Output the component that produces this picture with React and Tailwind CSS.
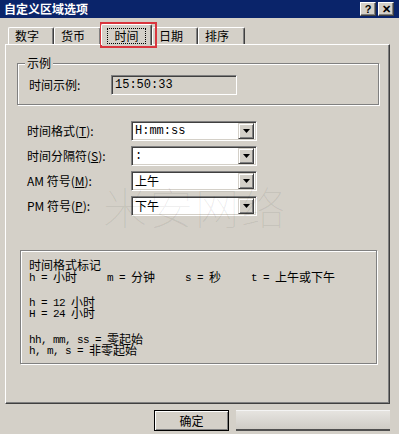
const FONT = "font-['Noto_Sans_CJK_SC','Noto_Sans',sans-serif]";

const Tab = ({ label, selected, w }) =>
  selected ? (
    <div
      className={`relative z-10 h-[21px] ${w} bg-[#d4d0c8] border-t border-l border-white border-r border-r-[#404040] rounded-t-[2px] shadow-[inset_-1px_0_0_#808080] flex items-start justify-center pt-[3px]`}
    >
      <span className="border border-dotted border-black px-[6px] h-[16px] leading-[14px] text-[12px]">{label}</span>
    </div>
  ) : (
    <div
      className={`mt-[3px] h-[17px] ${w} border-t border-l border-white border-r border-r-[#404040] rounded-t-[2px] shadow-[inset_-1px_0_0_#808080] pl-[6px] leading-[16px] text-[12px]`}
    >
      {label}
    </div>
  );

// latin text in the narrow mono face the dialog uses
const M = ({ children }) => (
  <span className="font-['Liberation_Mono',monospace] text-[11px] tracking-[-0.6px] align-[1px] whitespace-pre">{children}</span>
);

const Combo = ({ value, mono }) => (
  <div className="w-[126px] h-[20px] bg-white border border-[#808080] border-b-white border-r-white shadow-[inset_1px_1px_0_#404040,inset_-1px_-1px_0_#d4d0c8] flex items-center p-[2px]">
    <span className={`flex-1 pl-[1px] text-[12px] leading-[14px] ${mono ? "font-['Liberation_Mono',monospace] text-[11px]" : ""}`}>{value}</span>
    <div className="w-[16px] h-[16px] bg-[#d4d0c8] border border-[#d4d0c8] border-b-[#404040] border-r-[#404040] shadow-[inset_1px_1px_0_#fff,inset_-1px_-1px_0_#808080] flex items-center justify-center">
      <svg width="7" height="4" viewBox="0 0 7 4">
        <path d="M0 0h7L3.5 4z" fill="#000" />
      </svg>
    </div>
  </div>
);

const Row = ({ label, hot, value, mono }) => (
  <div className="flex items-center h-[20px]">
    <span className="w-[104px] text-[12px] leading-[14px]">
      {label}(<span className="underline">{hot}</span>):
    </span>
    <Combo value={value} mono={mono} />
  </div>
);

const Line = ({ children }) => <div className="h-[11.5px] leading-[11.5px] whitespace-nowrap">{children}</div>;

export default function App() {
  return (
    <div className={`relative w-[399px] h-[434px] bg-[#d4d0c8] overflow-hidden text-black ${FONT}`}>
      {/* title bar */}
      <div className="h-[18px] bg-[#0a246a] flex items-center justify-between pl-[4px] pr-[5px]">
        <span className="text-white font-bold text-[12px] leading-[14px]">自定义区域选项</span>
        <div className="flex gap-[2px]">
          {["?", "✕"].map((c) => (
            <div
              key={c}
              className="w-[16px] h-[14px] bg-[#d4d0c8] border border-white border-b-[#404040] border-r-[#404040] shadow-[inset_-1px_-1px_0_#808080] flex items-center justify-center text-[11px] font-bold leading-none font-['Liberation_Sans',sans-serif]"
            >
              {c}
            </div>
          ))}
        </div>
      </div>

      {/* tabs */}
      <div className="mt-[6px] h-[20px] flex items-start pl-[8px]">
        <Tab label="数字" w="w-[46px]" />
        <Tab label="货币" w="w-[47px]" />
        <Tab label="时间" w="w-[51px]" selected />
        <Tab label="日期" w="w-[46px]" />
        <Tab label="排序" w="w-[47px]" />
      </div>

      {/* panel */}
      <div className="ml-[5px] w-[385px] h-[360px] border-t border-l border-white border-r border-b border-r-[#404040] border-b-[#404040] shadow-[inset_-1px_-1px_0_#808080] pt-[18px]">
        <div className="relative ml-[11px] w-[362px] h-[42px] border border-[#808080] shadow-[inset_1px_1px_0_#fff,1px_1px_0_#fff] flex items-center pl-[11px]">
          <span className="absolute -top-[8px] left-[7px] px-[2px] bg-[#d4d0c8] text-[12px] leading-[14px]">示例</span>
          <span className="w-[82px] text-[12px] leading-[14px] mt-[2px]">时间示例:</span>
          <div className="mt-[2px] w-[126px] h-[20px] border border-[#808080] border-b-white border-r-white shadow-[inset_1px_1px_0_#404040] pl-[3px] text-[12px] leading-[18px] font-['Liberation_Mono',monospace] text-[11px]">
            15:50:33
          </div>
        </div>

        <div className="mt-[16px] pl-[21px] flex flex-col gap-[5px]">
          <Row label="时间格式" hot="T" value="H:mm:ss" mono />
          <Row label="时间分隔符" hot="S" value=":" mono />
          <Row label="AM 符号" hot="M" value="上午" />
          <Row label="PM 符号" hot="P" value="下午" />
        </div>

        <div className="ml-[14px] mt-[34px] w-[357px] h-[114px] border border-[#808080] shadow-[inset_1px_1px_0_#fff,1px_1px_0_#fff] pt-[8px] pl-[8px] text-[12px]">
          <Line>时间格式标记</Line>
          <Line>
            <span className="inline-block w-[78px]"><M>h = </M>小时</span>
            <span className="inline-block w-[78px]"><M>m = </M>分钟</span>
            <span className="inline-block w-[66px]"><M>s = </M>秒</span>
            <span><M>t = </M>上午或下午</span>
          </Line>
          <div className="h-[13.5px]" />
          <Line><M>h = 12 </M>小时</Line>
          <Line><M>H = 24 </M>小时</Line>
          <div className="h-[14px]" />
          <Line><M>hh, mm, ss = </M>零起始</Line>
          <Line><M>h, m, s = </M>非零起始</Line>
        </div>
      </div>

      {/* buttons */}
      <div className="mt-[6px] flex pl-[154px] gap-[7px]">
        <div className="w-[75px] h-[21px] border border-black shadow-[inset_1px_1px_0_#fff,inset_-1px_-1px_0_#808080] flex items-center justify-center text-[12px] leading-[14px]">
          确定
        </div>
        <div className="w-[154px] h-[21px] bg-gradient-to-b from-[#e6e4e0] to-[#cfccc6] border-t border-[#f4f4f4] border-b-2 border-b-[#505050]" />
      </div>

      {/* red highlight around selected tab */}
      <div className="absolute left-[100px] top-[22px] w-[57px] h-[26px] border-2 border-[#d9363e]" />

      {/* watermark */}
      <div className="absolute left-[103px] top-[180px] text-[44px] leading-[52px] tracking-[2px] text-black/[0.07] font-thin pointer-events-none">
        米安网络
      </div>
    </div>
  );
}
